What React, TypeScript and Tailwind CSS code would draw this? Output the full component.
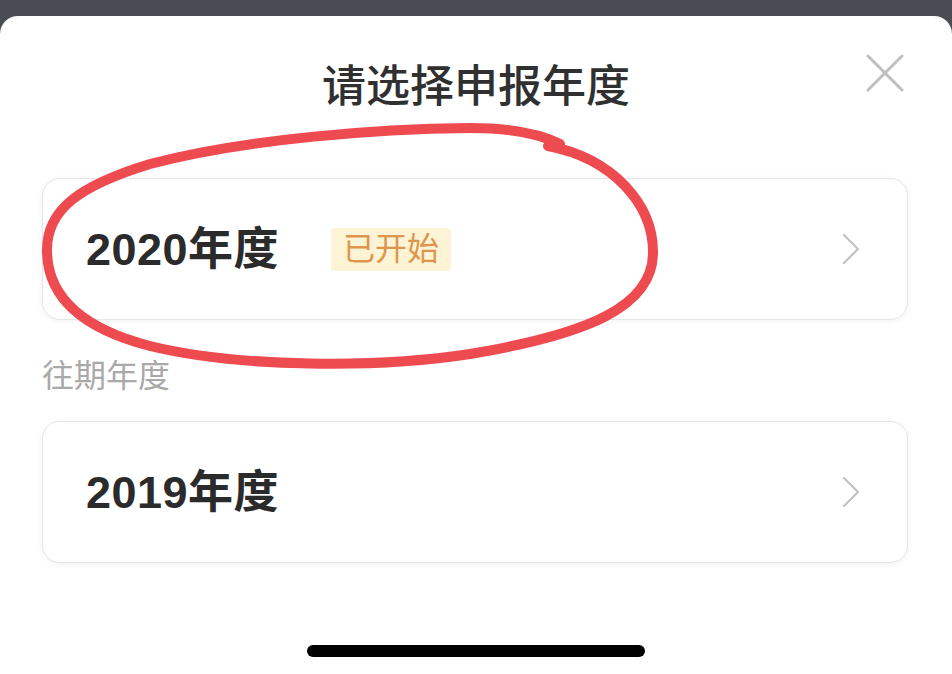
const FONT = '"Liberation Sans", "Noto Sans CJK SC", sans-serif';

function Chevron() {
  return (
    <svg className="ml-auto" width="20" height="32" viewBox="0 0 20 32" fill="none" stroke="#c2c2c2" strokeWidth="2.2" strokeLinecap="round" strokeLinejoin="round">
      <path d="M3 2 L17 16 L3 30" />
    </svg>
  );
}

function YearCard({ year, badge }: { year: string; badge?: string }) {
  return (
    <div className="flex h-[142px] items-center rounded-[18px] border-[1.5px] border-[#e6e6e6] bg-white pl-[43px] pr-[46px] shadow-[0_1px_6px_rgba(0,0,0,0.06)]">
      <span className="text-[45px] font-bold leading-none tracking-[0.5px] text-[#2b2b2b]">{year}</span>
      {badge && (
        <span className="ml-[52px] rounded-[4px] bg-[#fdf4d6] px-[12px] py-[5px] text-[32px] leading-[33px] text-[#e0954c]">
          {badge}
        </span>
      )}
      <Chevron />
    </div>
  );
}

export default function App() {
  return (
    <div className="relative h-[674px] w-[952px] overflow-hidden bg-[#494c52] pt-[16px]" style={{ fontFamily: FONT }}>
      <div className="relative h-[658px] rounded-t-[18px] bg-white pt-[45px]">
        <h1 className="text-center text-[44px] font-medium leading-[52px] text-[#303030]">请选择申报年度</h1>

        {/* close button */}
        <button className="absolute right-[48px] top-[38px] text-[#bfbfbf]">
          <svg width="38" height="38" viewBox="0 0 38 38" fill="none" stroke="currentColor" strokeWidth="3" strokeLinecap="round">
            <path d="M2 2 L36 36 M36 2 L2 36" />
          </svg>
        </button>

        <div className="ml-[42px] mr-[44px] mt-[65px]">
          <YearCard year="2020年度" badge="已开始" />
          <p className="mt-[36px] text-[32px] leading-[40px] text-[#a9a9a9]">往期年度</p>
          <div className="mt-[25px]">
            <YearCard year="2019年度" />
          </div>
        </div>

        <div className="mx-auto mt-[82px] h-[12px] w-[338px] rounded-full bg-black" />
      </div>

      {/* hand-drawn red annotation */}
      <svg className="pointer-events-none absolute left-0 top-0" width="952" height="674" viewBox="0 0 952 674" fill="none">
        <path
          d="M548 146 C612 158 654 204 653 254 C652 306 590 334 470 354 C380 368 240 368 150 346 C80 328 47 295 47 250 C47 210 78 186 150 164 C250 138 380 129 470 128 C510 128 540 134 560 144"
          stroke="#ee4b51"
          strokeWidth="10"
          strokeLinecap="round"
        />
      </svg>
    </div>
  );
}
